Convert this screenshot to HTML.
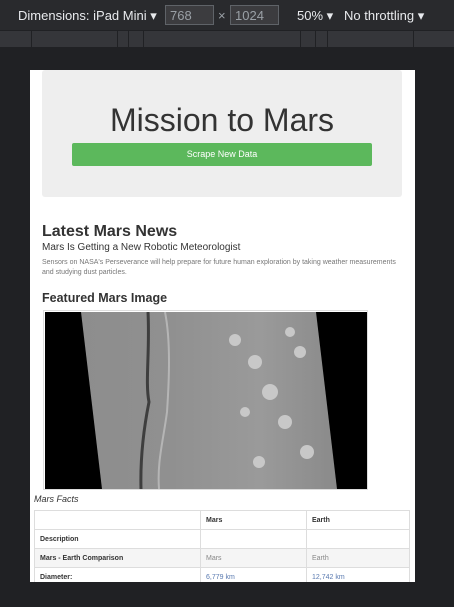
<!DOCTYPE html>
<html><head><style>
body{margin:0;width:454px;height:607px;background:#202124;position:relative;overflow:hidden;font-family:"Liberation Sans",sans-serif}
.tb{position:absolute;left:0;top:0;width:454px;height:30px;background:#292a2d;color:#e8eaed;font-size:13px}
.tb span{position:absolute;top:8px}
.inp{position:absolute;top:5px;height:20px;border:1px solid #5f6368;background:#3c3c3f;color:#9aa0a6;font-size:13px;box-sizing:border-box;padding:2px 4px}
.rul{position:absolute;left:0;top:31px;width:454px;height:16px;background:#35363a}
.rul i{position:absolute;top:0;width:1px;height:16px;background:#202124}
.page{position:absolute;left:30px;top:70px;width:385px;height:512px;background:#fff;overflow:hidden}
.jum{position:absolute;left:12px;top:0;width:360px;height:127px;background:#eee;border-radius:3px}
h1{position:absolute;left:0;width:360px;top:32px;margin:0;text-align:center;font-weight:400;font-size:32px;color:#333}
.btn{position:absolute;left:30px;top:73px;width:300px;height:23px;background:#5cb85c;border-radius:2px;color:#fff;font-size:9px;text-align:center;line-height:23px}
.t{position:absolute;left:12px;color:#333;margin:0}
table{position:absolute;left:4px;top:440px;width:376px;border-collapse:collapse;font-size:7px;border:1px solid #aaa}
td{border:1px solid #ddd;height:18px;padding:0 5px;font-weight:bold;color:#333}
td.v{font-weight:normal;color:#5a7ab0}
</style></head><body>
<div class="tb"><span style="left:18px">Dimensions: iPad Mini ▾</span>
<div class="inp" style="left:165px;width:49px">768</div><span style="left:218px;color:#9aa0a6">×</span>
<div class="inp" style="left:230px;width:49px">1024</div>
<span style="left:297px">50% ▾</span><span style="left:344px">No throttling ▾</span></div>
<div class="rul"><i style="left:31px"></i><i style="left:117px"></i><i style="left:128px"></i><i style="left:143px"></i><i style="left:300px"></i><i style="left:315px"></i><i style="left:327px"></i><i style="left:413px"></i></div>
<div class="page">
<div class="jum"><h1>Mission to Mars</h1><div class="btn">Scrape New Data</div></div>
<div class="t" style="top:153px;font-size:16px;font-weight:bold">Latest Mars News</div>
<div class="t" style="top:172px;font-size:10px">Mars Is Getting a New Robotic Meteorologist</div>
<div class="t" style="top:188px;font-size:7px;line-height:10px;color:#777;width:360px">Sensors on NASA's Perseverance will help prepare for future human exploration by taking weather measurements and studying dust particles.</div>
<div class="t" style="top:221px;font-size:12.5px;font-weight:bold">Featured Mars Image</div>
<div style="position:absolute;left:13px;top:240px;width:323px;height:178px;border:1px solid #ddd">
<svg width="322" height="177" viewBox="0 0 322 177" style="display:block;margin:1px 0 0 1px">
<rect width="322" height="177" fill="#000"/>
<defs><linearGradient id="g" x1="0" x2="1"><stop offset="0" stop-color="#8d8d8d"/><stop offset=".35" stop-color="#909090"/><stop offset=".7" stop-color="#9a9a9a"/><stop offset="1" stop-color="#8a8a8a"/></linearGradient></defs>
<polygon points="36,0 271,0 292,177 57,177" fill="url(#g)"/>
<path d="M103 0 C105 40 100 70 104 90 C100 110 95 140 96 177" stroke="#3e3e3e" stroke-width="3" fill="none"/>
<path d="M120 0 C126 30 124 70 122 100 C118 130 112 150 114 177" stroke="#b5b5b5" stroke-width="2" fill="none"/>
<g fill="#c8c8c8"><circle cx="190" cy="28" r="6"/><circle cx="210" cy="50" r="7"/><circle cx="225" cy="80" r="8"/><circle cx="240" cy="110" r="7"/><circle cx="255" cy="40" r="6"/><circle cx="262" cy="140" r="7"/><circle cx="214" cy="150" r="6"/><circle cx="245" cy="20" r="5"/><circle cx="200" cy="100" r="5"/></g>
</svg></div>
<div class="t" style="left:4px;top:424px;font-size:9px;font-style:italic">Mars Facts</div>
<table>
<tr><td style="width:155px"></td><td style="width:95px">Mars</td><td>Earth</td></tr>
<tr><td>Description</td><td></td><td></td></tr>
<tr style="background:#f5f5f5"><td>Mars - Earth Comparison</td><td class="v" style="color:#888">Mars</td><td class="v" style="color:#888">Earth</td></tr>
<tr><td>Diameter:</td><td class="v">6,779 km</td><td class="v">12,742 km</td></tr>
</table>
</div>
</body></html>
